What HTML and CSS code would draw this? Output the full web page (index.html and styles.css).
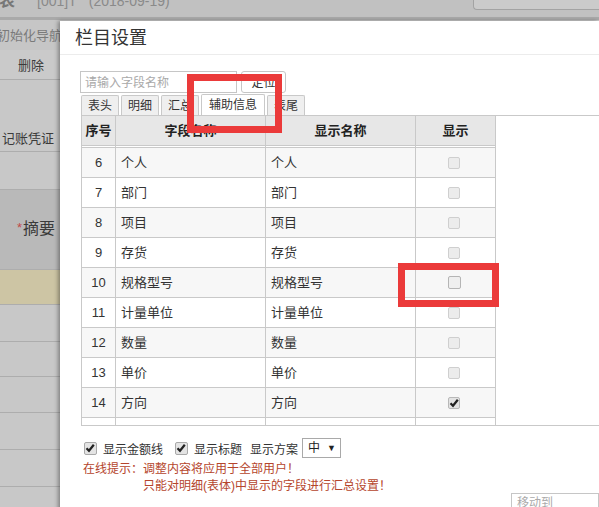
FILE: index.html
```html
<!DOCTYPE html>
<html lang="zh-CN">
<head>
<meta charset="utf-8">
<title>栏目设置</title>
<link rel="stylesheet" href="styles.css">
</head>
<body>
<div class="screen">
  <div class="topbar">
    <div class="tb-text"><span class="tb-title">表</span><span class="tb-code">[001]T</span><span class="tb-date">(2018-09-19)</span></div>
    <span class="tb-box"></span>
  </div>
  <div class="main">
    <aside class="side">
      <div class="s-row s1"><span class="nav">初始化导航</span></div>
      <div class="s-row s2">删除</div>
      <div class="s-row s3">记账凭证</div>
      <div class="s-row s4"></div>
      <div class="s-row s5"><span class="req">*</span>摘要</div>
      <div class="s-row s6"></div>
      <div class="s-row s7"></div>
      <div class="s-row s8"></div>
      <div class="s-row s9"></div>
      <div class="s-row s10"></div>
      <div class="s-row s11"></div>
      <div class="s-row s12"></div>
    </aside>
    <section class="dialog">
      <div class="dlg-title">栏目设置</div>
      <div class="dlg-body">
        <div class="search">
          <span class="input">请输入字段名称</span>
          <span class="btn">定位</span>
        </div>
        <div class="tabs">
          <span class="tab">表头</span>
          <span class="tab">明细</span>
          <span class="tab">汇总</span>
          <span class="tab active">辅助信息</span>
          <span class="tab">表尾</span>
        </div>
        <div class="grid">
          <div class="g-head">
            <span class="c">序号</span>
            <span class="c">字段名称</span>
            <span class="c">显示名称</span>
            <span class="c">显示</span>
          </div>
          <div class="g-body">
            <div class="g-rows">
              <div class="row"><span class="c"></span><span class="c"></span><span class="c"></span><span class="c"></span></div>
              <div class="row alt"><span class="c num">6</span><span class="c txt">个人</span><span class="c txt">个人</span><span class="c chk"><i class="cb"></i></span></div>
              <div class="row"><span class="c num">7</span><span class="c txt">部门</span><span class="c txt">部门</span><span class="c chk"><i class="cb"></i></span></div>
              <div class="row alt"><span class="c num">8</span><span class="c txt">项目</span><span class="c txt">项目</span><span class="c chk"><i class="cb"></i></span></div>
              <div class="row"><span class="c num">9</span><span class="c txt">存货</span><span class="c txt">存货</span><span class="c chk"><i class="cb"></i></span></div>
              <div class="row alt"><span class="c num">10</span><span class="c txt">规格型号</span><span class="c txt">规格型号</span><span class="c chk"><i class="cb strong"></i></span></div>
              <div class="row"><span class="c num">11</span><span class="c txt">计量单位</span><span class="c txt">计量单位</span><span class="c chk"><i class="cb"></i></span></div>
              <div class="row alt"><span class="c num">12</span><span class="c txt">数量</span><span class="c txt">数量</span><span class="c chk"><i class="cb"></i></span></div>
              <div class="row"><span class="c num">13</span><span class="c txt">单价</span><span class="c txt">单价</span><span class="c chk"><i class="cb"></i></span></div>
              <div class="row alt"><span class="c num">14</span><span class="c txt">方向</span><span class="c txt">方向</span><span class="c chk"><i class="cb on"><svg viewBox="0 0 12 12" width="12" height="12"><path d="M2.5 6.2 L5 8.8 L9.8 2.8" fill="none" stroke="#222" stroke-width="2.2"/></svg></i></span></div>
              <div class="row"><span class="c"></span><span class="c"></span><span class="c"></span><span class="c"></span></div>
            </div>
          </div>
        </div>
        <div class="opts">
          <i class="ck"><svg viewBox="0 0 12 12" width="12" height="12"><path d="M2.5 6.2 L5 8.8 L9.8 2.8" fill="none" stroke="#222" stroke-width="2.2"/></svg></i>
          <span class="lbl">显示金额线</span>
          <i class="ck second"><svg viewBox="0 0 12 12" width="12" height="12"><path d="M2.5 6.2 L5 8.8 L9.8 2.8" fill="none" stroke="#222" stroke-width="2.2"/></svg></i>
          <span class="lbl">显示标题</span>
          <span class="lbl plain">显示方案</span>
          <span class="select">中<span class="arrow">▼</span></span>
        </div>
        <div class="hint">
          <div class="h1">在线提示：调整内容将应用于全部用户！</div>
          <div class="h2">只能对明细(表体)中显示的字段进行汇总设置！</div>
        </div>
        <div class="foot"><span class="moveto">移动到</span></div>
      </div>
    </section>
  </div>
  <div class="mark mark1"></div>
  <div class="mark mark2"></div>
</div>
</body>
</html>
```

FILE: styles.css
```css
* { box-sizing: border-box; }
html, body { margin: 0; padding: 0; }
body {
  font-family: "Liberation Sans", "Noto Sans CJK SC", sans-serif;
  color: #333;
  background: #c8c8c8;
}
.screen {
  position: relative;
  width: 599px;
  height: 507px;
  overflow: hidden;
  background: #c8c8c8;
}

/* top bar */
.topbar {
  height: 20px;
  display: flex;
  align-items: flex-start;
  background: #c1c1c1;
  border-bottom: 3px solid #a9a9a9;
  overflow: hidden;
}
.tb-text {
  margin-top: -9px;
  font-size: 14px;
  line-height: 20px;
  color: #8a8a8a;
  white-space: nowrap;
}
.tb-title { font-weight: bold; color: #777; font-size: 16px; margin-left: -1px; }
.tb-code { margin-left: 22px; }
.tb-date { margin-left: 12px; }
.tb-box {
  margin-left: auto;
  width: 126px;
  height: 10px;
  border: 1px solid #a3a3a3;
  border-top: none;
  border-right: none;
  border-radius: 0 0 0 4px;
  background: #cbcbcb;
}

.main { display: flex; align-items: flex-start; }

/* left strip */
.side { width: 60px; flex: none; font-size: 13px; color: #444; }
.s-row { border-bottom: 1px solid #adadad; white-space: nowrap; overflow: hidden; }
.s1 { height: 30px; border-bottom: none; line-height: 31px; background: #c6c6c6; }
.s1 .nav { margin-left: -3px; color: #7a7a7a; }
.s2 { height: 30px; line-height: 32px; padding-left: 18px; background: #cacaca; color: #3a3a3a; }
.s3 { height: 72px; padding-top: 49px; line-height: 20px; padding-left: 2px; color: #3a3a3a; }
.s4 { height: 38px; }
.s5 {
  height: 80px;
  background: #b9b9b9;
  padding-top: 27px;
  line-height: 22px;
  font-size: 16px;
  text-align: right;
  padding-right: 5px;
  color: #3a3a3a;
}
.req { color: #c24a4a; font-size: 13px; vertical-align: 2px; margin-right: 1px; }
.s6 { height: 35px; background: #cdc5a4; }
.s7 { height: 37px; }
.s8 { height: 35px; }
.s9 { height: 36px; }
.s10 { height: 37px; }
.s11 { height: 37px; }
.s12 { height: 30px; border-bottom: none; }

/* dialog */
.dialog {
  width: 539px;
  flex: none;
  height: 500px;
  margin-top: 1px;
  background: #fff;
  box-shadow: -2px 0 4px rgba(0, 0, 0, 0.35);
}
.dlg-title {
  height: 34px;
  line-height: 34px;
  padding-left: 15px;
  font-size: 18px;
  color: #333;
  border-bottom: 1px solid #ececec;
}
.dlg-body { padding-top: 16px; padding-left: 20px; font-size: 12px; }

.search { display: flex; height: 22px; }
.input {
  width: 157px;
  height: 22px;
  border: 1px solid #c6c6c6;
  color: #a9a9a9;
  line-height: 22px;
  padding-left: 4px;
}
.btn {
  width: 45px;
  height: 22px;
  margin-left: 4px;
  border: 1px solid #c6c6c6;
  border-radius: 3px;
  text-align: center;
  line-height: 22px;
  color: #333;
}

.tabs { display: flex; gap: 2px; margin-top: 1px; margin-left: 1px; height: 21px; align-items: flex-end; }
.tab {
  height: 20px;
  padding: 0 6px;
  border: 1px solid #c9c9c9;
  border-bottom: none;
  border-radius: 2px 2px 0 0;
  background: #efefef;
  line-height: 20px;
  color: #333;
}
.tab.active { height: 21px; background: #fff; padding: 0 7px; line-height: 21px; }

.grid { margin-left: 1px; border-top: 1px solid #c9c9c9; }
.g-head, .row {
  display: grid;
  grid-template-columns: 34px 150px 150px 80px;
  width: max-content;
  border-left: 1px solid #c9c9c9;
}
.g-head { background: #e7e7e7; }
.c {
  display: block;
  height: 30px;
  border-right: 1px solid #c9c9c9;
  border-bottom: 1px solid #c9c9c9;
  font-size: 13px;
  line-height: 29px;
  white-space: nowrap;
}
.g-head .c { text-align: center; font-weight: bold; color: #222; }
.g-body { height: 280px; overflow: hidden; border-bottom: 1px solid #c9c9c9; }
.g-rows { margin-top: -28px; }
.row { background: #fff; }
.row.alt { background: #f7f7f7; }
.num { text-align: center; color: #333; }
.txt { padding-left: 5px; color: #333; }
.chk { display: flex; align-items: center; justify-content: center; padding-right: 3px; }
.cb {
  display: block;
  width: 12px;
  height: 12px;
  border: 1px solid #cfcfcf;
  border-radius: 2px;
  background: #ececec;
}
.cb.strong { width: 13px; height: 13px; border-color: #b5b5b5; background: #efefef; }
.cb.on { border-color: #b8b8b8; background: #e3e3e3; }
.cb svg, .ck svg { display: block; margin: -1px 0 0 -1px; }

.opts { display: flex; align-items: center; height: 20px; margin-top: 12px; padding-left: 4px; color: #333; }
.ck {
  display: block;
  width: 13px;
  height: 13px;
  border: 1px solid #a9a9a9;
  border-radius: 2px;
  background: #e4e4e4;
}
.ck.second { margin-left: 12px; }
.lbl { margin-left: 6px; }
.lbl.plain { margin-left: 8px; }
.select {
  margin-left: 4px;
  width: 39px;
  height: 20px;
  border: 1px solid #a9a9a9;
  line-height: 18px;
  padding-left: 5px;
  color: #222;
  font-size: 12px;
}
.arrow { font-size: 9px; margin-left: 7px; vertical-align: 1px; }

.hint { margin-top: 3px; color: #b5452c; line-height: 17px; }
.h1 { padding-left: 3px; }
.h2 { padding-left: 63px; }

.foot { display: flex; justify-content: flex-end; margin-top: -2px; }
.moveto {
  width: 88px;
  height: 20px;
  border: 1px solid #c6c6c6;
  padding-left: 5px;
  line-height: 18px;
  color: #aaa;
}

/* annotation marks */
.mark { position: absolute; border: 7px solid #eb3a3a; }
.mark1 { left: 187px; top: 74px; width: 95px; height: 59px; }
.mark2 { left: 398px; top: 263px; width: 101px; height: 44px; }
```
